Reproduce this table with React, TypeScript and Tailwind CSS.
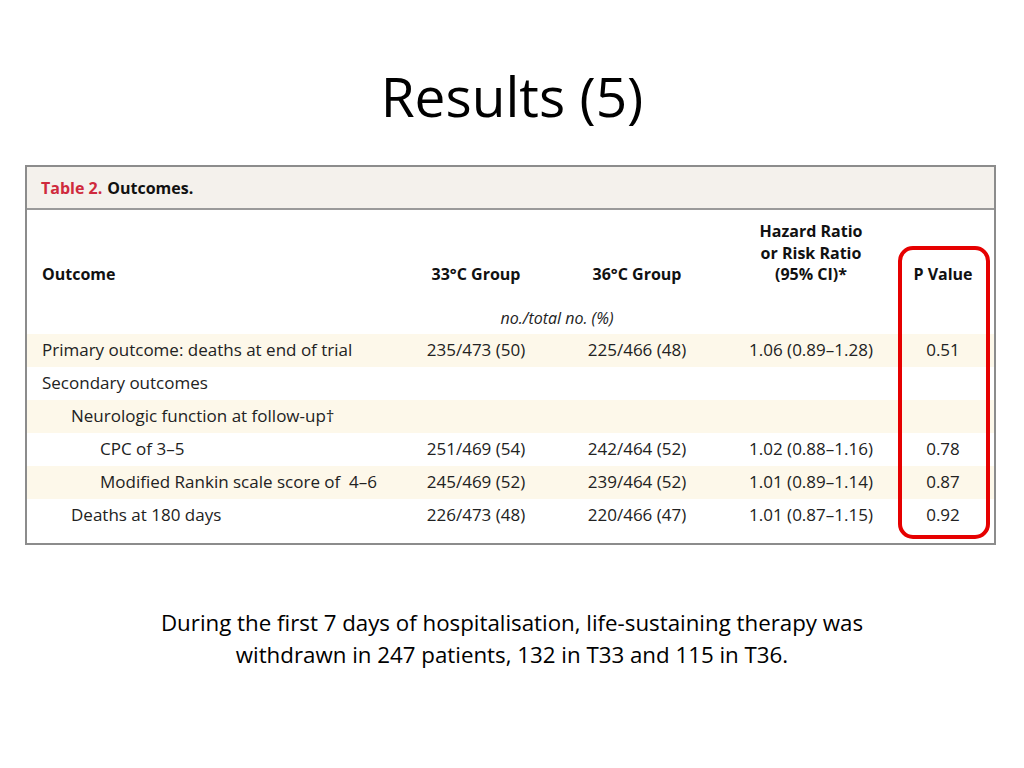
import React from "react";

const cols = "grid grid-cols-[369px_160px_162px_186px_78px] pr-[12px] items-center";

type Row = {
  label: string;
  indent: number;
  beige: boolean;
  a?: string;
  b?: string;
  hr?: string;
  p?: string;
};

const rows: Row[] = [
  { label: "Primary outcome: deaths at end of trial", indent: 0, beige: true, a: "235/473 (50)", b: "225/466 (48)", hr: "1.06 (0.89–1.28)", p: "0.51" },
  { label: "Secondary outcomes", indent: 0, beige: false },
  { label: "Neurologic function at follow-up†", indent: 1, beige: true },
  { label: "CPC of 3–5", indent: 2, beige: false, a: "251/469 (54)", b: "242/464 (52)", hr: "1.02 (0.88–1.16)", p: "0.78" },
  { label: "Modified Rankin scale score of  4–6", indent: 2, beige: true, a: "245/469 (52)", b: "239/464 (52)", hr: "1.01 (0.89–1.14)", p: "0.87" },
  { label: "Deaths at 180 days", indent: 1, beige: false, a: "226/473 (48)", b: "220/466 (47)", hr: "1.01 (0.87–1.15)", p: "0.92" },
];

function OutcomeRow({ row }: { row: Row }) {
  const pad = row.indent === 0 ? "pl-[15px]" : row.indent === 1 ? "pl-[44px]" : "pl-[73px]";
  return (
    <div className={`${cols} h-[33px] text-[17px] ${row.beige ? "bg-[#fdf8ea]" : "bg-white"}`}>
      <div className={`${pad} whitespace-pre`}>{row.label}</div>
      <div className="text-center">{row.a}</div>
      <div className="text-center">{row.b}</div>
      <div className="text-center">{row.hr}</div>
      <div className="text-center">{row.p}</div>
    </div>
  );
}

export default function App() {
  return (
    <div className="w-[1024px] h-[768px] bg-white flex flex-col items-center" style={{ fontFamily: "'Open Sans', sans-serif" }}>
      <h1 className="mt-[57px] h-[78px] text-[55px] leading-[78px] text-black">Results (5)</h1>

      <div className="relative mt-[30px] -ml-[3px] w-[971px] border-2 border-[#8c8c8c] text-[16px] text-[#222]">
        <div className="h-[43px] bg-[#f4f1ec] border-b-2 border-[#9a9a9a] flex items-center pl-[14px] font-bold text-[16px]">
          <span className="text-[#cf2a3d]">Table 2.</span>
          <span className="ml-[5px] text-[#111]">Outcomes.</span>
        </div>

        <div className={`${cols} items-end pt-[11px] font-bold text-[#111] leading-[21.5px]`}>
          <div className="pl-[15px]">Outcome</div>
          <div className="text-center">33°C Group</div>
          <div className="text-center">36°C Group</div>
          <div className="text-center">
            Hazard Ratio
            <br />
            or Risk Ratio
            <br />
            (95% CI)*
          </div>
          <div className="text-center">P Value</div>
        </div>

        <div className={`${cols} h-[32px] mt-[16px]`}>
          <div />
          <div className="col-span-2 text-center italic">no./total no. (%)</div>
        </div>

        {rows.map((r) => (
          <OutcomeRow key={r.label} row={r} />
        ))}
        <div className="h-[11px]" />

        <div className="absolute left-[871px] top-[79px] w-[92px] h-[293px] border-4 border-[#e60000] rounded-[15px]" />
      </div>

      <p className="mt-[62px] text-center text-[22.3px] leading-[32px] text-black">
        During the first 7 days of hospitalisation, life-sustaining therapy was
        <br />
        withdrawn in 247 patients, 132 in T33 and 115 in T36.
      </p>
    </div>
  );
}
